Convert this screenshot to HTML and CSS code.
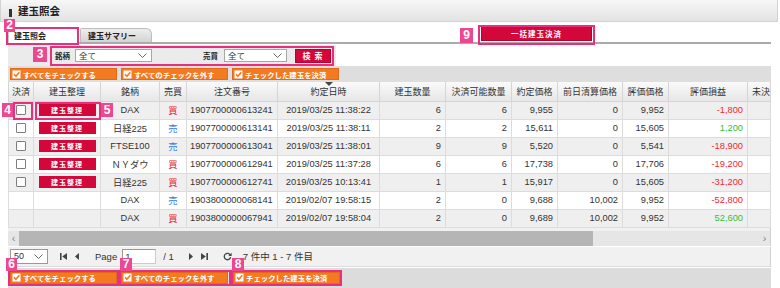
FILE: index.html
```html
<!DOCTYPE html>
<html lang="ja">
<head>
<meta charset="utf-8">
<title>建玉照会</title>
<link rel="stylesheet" href="styles.css">
</head>
<body>
<div class="page">
  <div class="titlebar"><span class="titlemark"></span><h1>建玉照会</h1></div>

  <div class="tabs">
    <div class="tab active">建玉照会</div>
    <div class="tab inactive">建玉サマリー</div>
    <button class="btn-red bulk">一括建玉決済</button>
  </div>

  <div class="search">
    <span class="lbl">銘柄</span>
    <div class="select sel-name">全て<svg width="9" height="5" viewBox="0 0 9 5"><path d="M0.5 0.5 L4.5 4.5 L8.5 0.5" fill="none" stroke="#666"/></svg></div>
    <span class="lbl lbl2">売買</span>
    <div class="select sel-side">全て<svg width="9" height="5" viewBox="0 0 9 5"><path d="M0.5 0.5 L4.5 4.5 L8.5 0.5" fill="none" stroke="#666"/></svg></div>
    <button class="btn-red btn-search">検 索</button>
  </div>

  <div class="checkbar">
    <button class="btn-orange"><svg width="9" height="9" viewBox="0 0 9 9"><rect x="0.5" y="0.5" width="8" height="8" fill="#fff"/><path d="M2 4.3 L3.9 6.3 L7.3 2.2" stroke="#f47a22" stroke-width="1.6" fill="none"/></svg>すべてをチェックする</button>
    <button class="btn-orange"><svg width="9" height="9" viewBox="0 0 9 9"><rect x="0.5" y="0.5" width="8" height="8" fill="#fff"/><path d="M2 4.3 L3.9 6.3 L7.3 2.2" stroke="#f47a22" stroke-width="1.6" fill="none"/></svg>すべてのチェックを外す</button>
    <button class="btn-orange"><svg width="9" height="9" viewBox="0 0 9 9"><rect x="0.5" y="0.5" width="8" height="8" fill="#fff"/><path d="M2 4.3 L3.9 6.3 L7.3 2.2" stroke="#f47a22" stroke-width="1.6" fill="none"/></svg>チェックした建玉を決済</button>
  </div>

  <div class="grid">
    <table>
      <colgroup>
        <col style="width:25px"><col style="width:67px"><col style="width:59px"><col style="width:27px"><col style="width:91px"><col style="width:102px"><col style="width:66px"><col style="width:66px"><col style="width:46px"><col style="width:65px"><col style="width:46px"><col style="width:79px"><col style="width:23px">
      </colgroup>
      <thead>
        <tr>
          <th>決済</th><th>建玉整理</th><th>銘柄</th><th>売買</th><th>注文番号</th><th class="sorted">約定日時</th><th>建玉数量</th><th>決済可能数量</th><th>約定価格</th><th>前日清算価格</th><th>評価価格</th><th>評価損益</th><th class="cut">未決</th>
        </tr>
      </thead>
      <tbody>
        <tr class="odd">
          <td class="c"><span class="chk"></span></td><td class="c"><span class="btn-sm">建玉整理</span></td><td class="c">DAX</td><td class="c buy">買</td><td class="l">1907700000613241</td><td class="c">2019/03/25 11:38:22</td><td class="r">6</td><td class="r">6</td><td class="r">9,955</td><td class="r">0</td><td class="r">9,952</td><td class="r loss">-1,800</td><td></td>
        </tr>
        <tr>
          <td class="c"><span class="chk"></span></td><td class="c"><span class="btn-sm">建玉整理</span></td><td class="c">日経225</td><td class="c sell">売</td><td class="l">1907700000613141</td><td class="c">2019/03/25 11:38:11</td><td class="r">2</td><td class="r">2</td><td class="r">15,611</td><td class="r">0</td><td class="r">15,605</td><td class="r gain">1,200</td><td></td>
        </tr>
        <tr class="odd">
          <td class="c"><span class="chk"></span></td><td class="c"><span class="btn-sm">建玉整理</span></td><td class="c">FTSE100</td><td class="c sell">売</td><td class="l">1907700000613041</td><td class="c">2019/03/25 11:38:01</td><td class="r">9</td><td class="r">9</td><td class="r">5,520</td><td class="r">0</td><td class="r">5,541</td><td class="r loss">-18,900</td><td></td>
        </tr>
        <tr>
          <td class="c"><span class="chk"></span></td><td class="c"><span class="btn-sm">建玉整理</span></td><td class="c">ＮＹダウ</td><td class="c buy">買</td><td class="l">1907700000612941</td><td class="c">2019/03/25 11:37:28</td><td class="r">6</td><td class="r">6</td><td class="r">17,738</td><td class="r">0</td><td class="r">17,706</td><td class="r loss">-19,200</td><td></td>
        </tr>
        <tr class="odd">
          <td class="c"><span class="chk"></span></td><td class="c"><span class="btn-sm">建玉整理</span></td><td class="c">日経225</td><td class="c buy">買</td><td class="l">1907700000612741</td><td class="c">2019/03/25 10:13:41</td><td class="r">1</td><td class="r">1</td><td class="r">15,917</td><td class="r">0</td><td class="r">15,605</td><td class="r loss">-31,200</td><td></td>
        </tr>
        <tr>
          <td></td><td></td><td class="c">DAX</td><td class="c sell">売</td><td class="l">1903800000068141</td><td class="c">2019/02/07 19:58:15</td><td class="r">2</td><td class="r">0</td><td class="r">9,688</td><td class="r">10,002</td><td class="r">9,952</td><td class="r loss">-52,800</td><td></td>
        </tr>
        <tr class="odd">
          <td></td><td></td><td class="c">DAX</td><td class="c buy">買</td><td class="l">1903800000067941</td><td class="c">2019/02/07 19:58:04</td><td class="r">2</td><td class="r">0</td><td class="r">9,689</td><td class="r">10,002</td><td class="r">9,952</td><td class="r gain">52,600</td><td></td>
        </tr>
      </tbody>
    </table>
    <div class="hscroll">
      <span class="arrow">&lsaquo;</span>
      <div class="track"><div class="thumb"></div></div>
      <span class="arrow">&rsaquo;</span>
    </div>
  </div>

  <div class="pager">
    <div class="select sel-size">50<svg width="9" height="5" viewBox="0 0 9 5"><path d="M0.5 0.5 L4.5 4.5 L8.5 0.5" fill="none" stroke="#666"/></svg></div>
    <svg class="pico first" width="7" height="7" viewBox="0 0 7 7"><rect x="0" y="0" width="1.6" height="7" fill="#444"/><path d="M7 0 L2.2 3.5 L7 7Z" fill="#444"/></svg>
    <svg class="pico prev" width="4" height="7" viewBox="0 0 4 7"><path d="M4 0 L0 3.5 L4 7Z" fill="#444"/></svg>
    <span class="ptxt page-lbl">Page</span>
    <div class="pinput">1</div>
    <span class="ptxt of">/ 1</span>
    <svg class="pico next" width="4" height="7" viewBox="0 0 4 7"><path d="M0 0 L4 3.5 L0 7Z" fill="#444"/></svg>
    <svg class="pico last" width="7" height="7" viewBox="0 0 7 7"><path d="M0 0 L4.8 3.5 L0 7Z" fill="#444"/><rect x="5.4" y="0" width="1.6" height="7" fill="#444"/></svg>
    <svg class="pico refresh" width="9" height="9" viewBox="0 0 9 9"><path d="M7.4 3.2 A3.2 3.2 0 1 0 7.6 5.2" fill="none" stroke="#444" stroke-width="1.3"/><path d="M8.6 0.8 L8.6 4 L5.4 4Z" fill="#444"/></svg>
    <span class="ptxt count">7 件中 1 - 7 件目</span>
  </div>

  <div class="checkbar bottom">
    <button class="btn-orange"><svg width="9" height="9" viewBox="0 0 9 9"><rect x="0.5" y="0.5" width="8" height="8" fill="#fff"/><path d="M2 4.3 L3.9 6.3 L7.3 2.2" stroke="#f47a22" stroke-width="1.6" fill="none"/></svg>すべてをチェックする</button>
    <button class="btn-orange"><svg width="9" height="9" viewBox="0 0 9 9"><rect x="0.5" y="0.5" width="8" height="8" fill="#fff"/><path d="M2 4.3 L3.9 6.3 L7.3 2.2" stroke="#f47a22" stroke-width="1.6" fill="none"/></svg>すべてのチェックを外す</button>
    <button class="btn-orange"><svg width="9" height="9" viewBox="0 0 9 9"><rect x="0.5" y="0.5" width="8" height="8" fill="#fff"/><path d="M2 4.3 L3.9 6.3 L7.3 2.2" stroke="#f47a22" stroke-width="1.6" fill="none"/></svg>チェックした建玉を決済</button>
  </div>

  <!-- annotation overlays -->
  <div class="mark m2"></div><div class="badge b2">2</div>
  <div class="mark m3"></div><div class="badge b3">3</div>
  <div class="mark m9"></div><div class="badge b9">9</div>
  <div class="mark m4"></div><div class="badge b4">4</div>
  <div class="mark m5"></div><div class="badge b5">5</div>
  <div class="mark m6"></div><div class="badge b6">6</div>
  <div class="mark m7"></div><div class="badge b7">7</div>
  <div class="mark m8"></div><div class="badge b8">8</div>
</div>
</body>
</html>
```

FILE: styles.css
```css
* { box-sizing: border-box; margin: 0; padding: 0; }
html, body { margin: 0; background: #fff; }
body {
  width: 780px; height: 288px; overflow: hidden;
  font-family: "Liberation Sans", "Noto Sans CJK JP", sans-serif;
  color: #333;
}
.page { position: relative; width: 780px; height: 288px; }

/* title */
.titlebar {
  width: 778px; height: 22px;
  background: linear-gradient(#f7f7f7, #e2e2e2);
  border: 1px solid #d2d2d2; border-top: 0;
  display: flex; align-items: center; padding-left: 8px;
}
.titlemark { width: 3px; height: 8px; background: #333; margin: 4px 6px 0 0; }
.titlebar h1 { font-family: "Noto Sans CJK JP", sans-serif; font-size: 10.5px; font-weight: bold; color: #222; }

/* tabs */
.tabs {
  display: flex; align-items: flex-end;
  height: 22px; margin: 0 9px 0 8px;
  border-bottom: 2px solid #ababab;
}
.tab { font-family: "Noto Sans CJK JP", sans-serif; font-size: 8px; font-weight: bold; color: #222; }
.tab.active {
  width: 70px; height: 17px; margin-bottom: -2px;
  background: #fff; border: 1px solid #c6c6c6; border-bottom: 0;
  padding-left: 5px; line-height: 15px;
}
.tab.inactive {
  width: 72px; height: 14px; margin-left: 2px;
  background: linear-gradient(#eeeeee, #d3d3d3);
  border: 1px solid #bdbdbd; border-bottom: 0;
  border-radius: 2px 6px 0 0;
  padding-left: 7px; line-height: 13px;
}
.btn-red {
  background: #d4073b; color: #fff; border: 1px solid #b9002f;
  font-family: "Noto Sans CJK JP", sans-serif; font-weight: bold;
  cursor: pointer;
}
.bulk {
  width: 111px; height: 15px; margin: 0 179px 1px auto;
  font-size: 7.5px; letter-spacing: 1px; line-height: 12px;
}

/* search */
.search {
  display: flex; align-items: center;
  width: 328px; height: 21px; margin: 1px 0 0 8px;
  background: #ebebeb; padding-left: 47px;
}
.lbl { font-family: "Noto Sans CJK JP", sans-serif; font-size: 7.5px; font-weight: bold; color: #222; width: 15px; }
.lbl2 { margin-left: 51px; }
.select {
  display: flex; align-items: center; justify-content: space-between;
  height: 13px; background: #fff; border: 1px solid #a7a7a7;
  font-family: "Noto Sans CJK JP", sans-serif; font-size: 8.5px; color: #333;
  padding: 0 4px 0 3px; line-height: 11px;
}
.sel-name { width: 77px; margin-left: 5px; }
.sel-side { width: 63px; margin-left: 6px; }
.btn-search {
  width: 36px; height: 14px; margin-left: 8px;
  font-size: 8px; line-height: 11px; letter-spacing: 1px;
}

/* check bars */
.checkbar {
  display: flex; gap: 4px;
  width: 763px; height: 16px; margin-left: 8px;
  background: #dedede; padding: 2px 0 0 2px;
}
.btn-orange {
  display: flex; align-items: center;
  width: 107px; height: 12px;
  background: #f47a22; border: 1px solid #e6691a; color: #fff;
  font-family: "Noto Sans CJK JP", sans-serif; font-size: 7.4px; font-weight: bold;
  padding-left: 1px; white-space: nowrap; cursor: pointer;
}
.btn-orange svg { margin-right: 2px; flex: none; }
.checkbar.bottom { height: 20px; margin-top: 1px; padding-top: 4px; background: #dcdcdc; }
.checkbar.bottom .btn-orange:nth-child(3) { margin-left: 1px; }

/* grid */
.grid { width: 763px; margin-left: 8px; border-right: 1px solid #d0d0d0; }
table {
  width: 762px; table-layout: fixed; border-collapse: collapse;
  font-size: 9.3px; color: #333;
}
th {
  height: 19px; position: relative;
  background: linear-gradient(#fafafa, #e6e6e6);
  border: 1px solid #d5d5d5; border-top: 0;
  font-family: "Noto Sans CJK JP", sans-serif; font-weight: normal; font-size: 9px;
  color: #333; white-space: nowrap; overflow: hidden; padding-top: 1px;
}
th.sorted::before {
  content: ""; position: absolute; left: 50%; top: 0; margin-left: -4px;
  border-left: 4px solid transparent; border-right: 4px solid transparent;
  border-top: 4px solid #444;
}
th.cut { text-align: left; padding-left: 4px; }
td {
  height: 18px; border: 1px solid #dcdcdc;
  white-space: nowrap; overflow: hidden; padding: 0;
}
tr.odd td { background: #efefef; }
td.c { text-align: center; }
td.l { text-align: left; padding-left: 3px; }
td.r { text-align: right; padding-right: 4px; }
td.buy { color: #e8252b; font-family: "Noto Sans CJK JP", sans-serif; }
td.sell { color: #3680d8; font-family: "Noto Sans CJK JP", sans-serif; }
td.loss { color: #f2272d; }
td.gain { color: #35c035; }
.chk {
  display: inline-block; width: 10px; height: 10px;
  border: 1px solid #7d7d7d; background: #fff; border-radius: 1px;
  vertical-align: middle;
}
.btn-sm {
  display: inline-block; width: 57px; height: 12px;
  background: #d4073b; color: #fff;
  font-family: "Noto Sans CJK JP", sans-serif; font-size: 7px; font-weight: bold;
  letter-spacing: 1px; line-height: 12px; vertical-align: middle;
}

/* horizontal scroll */
.hscroll {
  display: flex; align-items: center;
  height: 18px; padding-top: 3px; background: #f0f0f0;
}
.hscroll .arrow { width: 11px; height: 15px; background: #e6e6e6; color: #888; font-size: 11px; line-height: 14px; text-align: center; }
.hscroll .track { flex: 1; height: 15px; background: #e6e6e6; }
.hscroll .thumb { width: 574px; height: 15px; background: #b5b5b5; }

/* pager */
.pager {
  display: flex; align-items: center;
  width: 763px; height: 20px; margin: 1px 0 0 8px;
  background: #f1f1f1; border-bottom: 1px solid #dcdcdc; border-right: 1px solid #d0d0d0;
  padding-left: 2px;
}
.sel-size { width: 38px; height: 15px; font-family: "Liberation Sans", sans-serif; font-size: 9px; border-color: #999; }
.pico { flex: none; }
.first { margin-left: 12px; }
.prev { margin-left: 8px; }
.ptxt { font-family: "Liberation Sans", "Noto Sans CJK JP", sans-serif; font-size: 9.5px; color: #333; white-space: nowrap; }
.page-lbl { margin-left: 16px; }
.pinput {
  width: 34px; height: 15px; margin-left: 5px;
  background: #fff; border: 1px solid #999; border-right-color: #ccc; border-bottom-color: #ccc;
  font-size: 9.5px; padding-left: 2px; line-height: 13px;
}
.of { margin-left: 7px; }
.next { margin-left: 15px; }
.last { margin-left: 8px; }
.refresh { margin-left: 15px; }
.count { margin-left: 11px; }

/* annotations */
.mark { position: absolute; border: 2px solid #e6307e; }
.badge {
  position: absolute; background: #ec4790; color: #fff;
  font-family: "Liberation Sans", sans-serif; font-weight: bold; font-size: 12px;
  text-align: center;
}
.m2 { left: 6px; top: 27px; width: 73px; height: 18px; }
.b2 { left: 4px; top: 19px; width: 11px; height: 13px; line-height: 13px; }
.m3 { left: 50px; top: 46px; width: 284px; height: 20px; }
.b3 { left: 33px; top: 47px; width: 14px; height: 15px; line-height: 15px; }
.m9 { left: 478px; top: 25px; width: 117px; height: 20px; }
.b9 { left: 460px; top: 28px; width: 13px; height: 15px; line-height: 15px; }
.m4 { left: 13px; top: 102px; width: 20px; height: 18px; }
.b4 { left: 2px; top: 103px; width: 11px; height: 14px; line-height: 14px; }
.m5 { left: 35px; top: 102px; width: 66px; height: 18px; }
.b5 { left: 101px; top: 103px; width: 12px; height: 14px; line-height: 14px; }
.m6 { left: 8px; top: 270px; width: 111px; height: 16px; }
.b6 { left: 6px; top: 258px; width: 11px; height: 13px; line-height: 13px; }
.m7 { left: 119px; top: 270px; width: 112px; height: 16px; }
.b7 { left: 120px; top: 258px; width: 12px; height: 13px; line-height: 13px; }
.m8 { left: 231px; top: 270px; width: 111px; height: 16px; }
.b8 { left: 232px; top: 258px; width: 12px; height: 13px; line-height: 13px; }
```
